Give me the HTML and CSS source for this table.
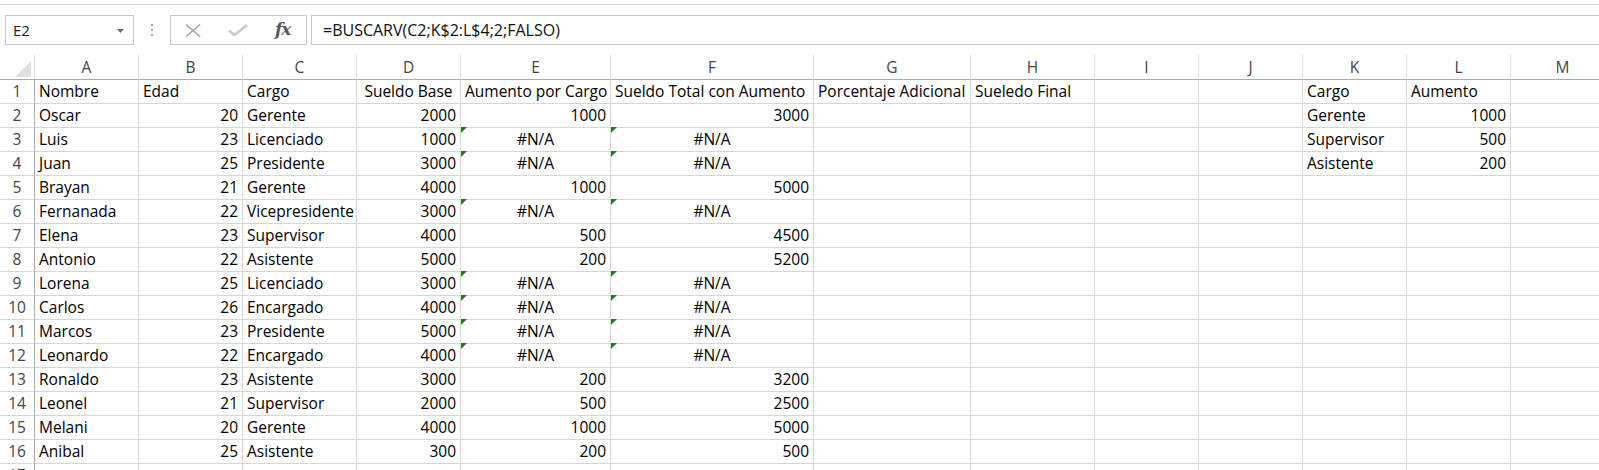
FILE: index.html
```html
<!DOCTYPE html>
<html lang="es">
<head>
<meta charset="utf-8">
<title>Excel - BUSCARV</title>
<link rel="stylesheet" href="styles.css">
</head>
<body>
<div class="topline"></div>
<div class="fbar">
  <div class="namebox"><span>E2</span><svg class="ddarrow" width="7" height="4" viewBox="0 0 7 4"><polygon points="0,0 7,0 3.5,4" fill="#6e6e6e"/></svg></div>
  <div class="sep"><svg width="2" height="12" viewBox="0 0 2 12"><rect x="0" y="0" width="2" height="2" fill="#a8a8a8"/><rect x="0" y="5" width="2" height="2" fill="#a8a8a8"/><rect x="0" y="10" width="2" height="2" fill="#a8a8a8"/></svg></div>
  <div class="fbtns">
    <svg width="16" height="13" viewBox="0 0 16 13"><path d="M1 0.5 L15 12.5 M15 0.5 L1 12.5" stroke="#a9a9a9" stroke-width="1.6" fill="none"/></svg>
    <svg width="20" height="12" viewBox="0 0 20 12"><path d="M1 6.5 L6.5 11 L19 1" stroke="#c9c9c9" stroke-width="2.6" fill="none"/></svg>
    <span class="fx">fx</span>
  </div>
  <div class="finput">=BUSCARV(C2;K$2:L$4;2;FALSO)</div>
</div>
<div class="sheet">
  <div class="row hdr"><div class="c corner"><svg width="16" height="16" viewBox="0 0 16 16"><polygon points="16,0 16,16 0,16" fill="#dfdfdf"/></svg></div><div class="c">A</div><div class="c">B</div><div class="c">C</div><div class="c">D</div><div class="c">E</div><div class="c">F</div><div class="c">G</div><div class="c">H</div><div class="c">I</div><div class="c">J</div><div class="c">K</div><div class="c">L</div><div class="c">M</div></div>
  <div class="row"><div class="c rh">1</div><div class="c">Nombre</div><div class="c">Edad</div><div class="c">Cargo</div><div class="c m">Sueldo Base</div><div class="c">Aumento por Cargo</div><div class="c">Sueldo Total con Aumento</div><div class="c">Porcentaje Adicional</div><div class="c">Sueledo Final</div><div class="c"></div><div class="c"></div><div class="c">Cargo</div><div class="c">Aumento</div><div class="c"></div></div>
  <div class="row"><div class="c rh">2</div><div class="c">Oscar</div><div class="c r">20</div><div class="c">Gerente</div><div class="c r">2000</div><div class="c r">1000</div><div class="c r">3000</div><div class="c"></div><div class="c"></div><div class="c"></div><div class="c"></div><div class="c">Gerente</div><div class="c r">1000</div><div class="c"></div></div>
  <div class="row"><div class="c rh">3</div><div class="c">Luis</div><div class="c r">23</div><div class="c">Licenciado</div><div class="c r">1000</div><div class="c m err">#N/A</div><div class="c m err">#N/A</div><div class="c"></div><div class="c"></div><div class="c"></div><div class="c"></div><div class="c">Supervisor</div><div class="c r">500</div><div class="c"></div></div>
  <div class="row"><div class="c rh">4</div><div class="c">Juan</div><div class="c r">25</div><div class="c">Presidente</div><div class="c r">3000</div><div class="c m err">#N/A</div><div class="c m err">#N/A</div><div class="c"></div><div class="c"></div><div class="c"></div><div class="c"></div><div class="c">Asistente</div><div class="c r">200</div><div class="c"></div></div>
  <div class="row"><div class="c rh">5</div><div class="c">Brayan</div><div class="c r">21</div><div class="c">Gerente</div><div class="c r">4000</div><div class="c r">1000</div><div class="c r">5000</div><div class="c"></div><div class="c"></div><div class="c"></div><div class="c"></div><div class="c"></div><div class="c"></div><div class="c"></div></div>
  <div class="row"><div class="c rh">6</div><div class="c">Fernanada</div><div class="c r">22</div><div class="c">Vicepresidente</div><div class="c r">3000</div><div class="c m err">#N/A</div><div class="c m err">#N/A</div><div class="c"></div><div class="c"></div><div class="c"></div><div class="c"></div><div class="c"></div><div class="c"></div><div class="c"></div></div>
  <div class="row"><div class="c rh">7</div><div class="c">Elena</div><div class="c r">23</div><div class="c">Supervisor</div><div class="c r">4000</div><div class="c r">500</div><div class="c r">4500</div><div class="c"></div><div class="c"></div><div class="c"></div><div class="c"></div><div class="c"></div><div class="c"></div><div class="c"></div></div>
  <div class="row"><div class="c rh">8</div><div class="c">Antonio</div><div class="c r">22</div><div class="c">Asistente</div><div class="c r">5000</div><div class="c r">200</div><div class="c r">5200</div><div class="c"></div><div class="c"></div><div class="c"></div><div class="c"></div><div class="c"></div><div class="c"></div><div class="c"></div></div>
  <div class="row"><div class="c rh">9</div><div class="c">Lorena</div><div class="c r">25</div><div class="c">Licenciado</div><div class="c r">3000</div><div class="c m err">#N/A</div><div class="c m err">#N/A</div><div class="c"></div><div class="c"></div><div class="c"></div><div class="c"></div><div class="c"></div><div class="c"></div><div class="c"></div></div>
  <div class="row"><div class="c rh">10</div><div class="c">Carlos</div><div class="c r">26</div><div class="c">Encargado</div><div class="c r">4000</div><div class="c m err">#N/A</div><div class="c m err">#N/A</div><div class="c"></div><div class="c"></div><div class="c"></div><div class="c"></div><div class="c"></div><div class="c"></div><div class="c"></div></div>
  <div class="row"><div class="c rh">11</div><div class="c">Marcos</div><div class="c r">23</div><div class="c">Presidente</div><div class="c r">5000</div><div class="c m err">#N/A</div><div class="c m err">#N/A</div><div class="c"></div><div class="c"></div><div class="c"></div><div class="c"></div><div class="c"></div><div class="c"></div><div class="c"></div></div>
  <div class="row"><div class="c rh">12</div><div class="c">Leonardo</div><div class="c r">22</div><div class="c">Encargado</div><div class="c r">4000</div><div class="c m err">#N/A</div><div class="c m err">#N/A</div><div class="c"></div><div class="c"></div><div class="c"></div><div class="c"></div><div class="c"></div><div class="c"></div><div class="c"></div></div>
  <div class="row"><div class="c rh">13</div><div class="c">Ronaldo</div><div class="c r">23</div><div class="c">Asistente</div><div class="c r">3000</div><div class="c r">200</div><div class="c r">3200</div><div class="c"></div><div class="c"></div><div class="c"></div><div class="c"></div><div class="c"></div><div class="c"></div><div class="c"></div></div>
  <div class="row"><div class="c rh">14</div><div class="c">Leonel</div><div class="c r">21</div><div class="c">Supervisor</div><div class="c r">2000</div><div class="c r">500</div><div class="c r">2500</div><div class="c"></div><div class="c"></div><div class="c"></div><div class="c"></div><div class="c"></div><div class="c"></div><div class="c"></div></div>
  <div class="row"><div class="c rh">15</div><div class="c">Melani</div><div class="c r">20</div><div class="c">Gerente</div><div class="c r">4000</div><div class="c r">1000</div><div class="c r">5000</div><div class="c"></div><div class="c"></div><div class="c"></div><div class="c"></div><div class="c"></div><div class="c"></div><div class="c"></div></div>
  <div class="row"><div class="c rh">16</div><div class="c">Anibal</div><div class="c r">25</div><div class="c">Asistente</div><div class="c r">300</div><div class="c r">200</div><div class="c r">500</div><div class="c"></div><div class="c"></div><div class="c"></div><div class="c"></div><div class="c"></div><div class="c"></div><div class="c"></div></div>
  <div class="row"><div class="c rh">17</div><div class="c"></div><div class="c"></div><div class="c"></div><div class="c"></div><div class="c"></div><div class="c"></div><div class="c"></div><div class="c"></div><div class="c"></div><div class="c"></div><div class="c"></div><div class="c"></div><div class="c"></div></div>
</div>
</body>
</html>
```
FILE: styles.css
```css
* { box-sizing: border-box; }
html, body { margin: 0; padding: 0; background: #fff; }
body {
  width: 1599px;
  height: 470px;
  overflow: hidden;
  font-family: "Open Sans", "Liberation Sans", sans-serif;
  font-size: 15.5px;
  color: #000;
}
.topline { height: 5px; border-bottom: 1px solid #d6d6d6; }
.fbar {
  display: flex;
  height: 30px;
  margin-top: 10px;
}
.namebox {
  margin-left: 5px;
  width: 129px;
  flex: none;
  border: 1px solid #c6c6c6;
  display: flex;
  align-items: center;
  justify-content: space-between;
  padding: 0 9px 0 7px;
  font-size: 15px;
  color: #222;
}
.ddarrow { margin-top: 1px; }
.sep {
  width: 36px;
  flex: none;
  display: flex;
  align-items: center;
  justify-content: center;
  padding-right: 1px;
}
.fbtns {
  width: 137px;
  flex: none;
  border: 1px solid #c6c6c6;
  display: flex;
  align-items: center;
  justify-content: space-around;
  padding: 0 2px 0 0;
}
.fx {
  font-family: "DejaVu Serif", "Liberation Serif", serif;
  font-style: italic;
  font-weight: bold;
  font-size: 17px;
  color: #5a5a5a;
  letter-spacing: -1px;
  margin-top: -2px;
}
.finput {
  flex: 1;
  margin-left: 4px;
  margin-right: -4px;
  border: 1px solid #c6c6c6;
  display: flex;
  align-items: center;
  padding-left: 11px;
  font-size: 16px;
  color: #111;
}
.sheet { margin-top: 10px; }
.row {
  display: grid;
  grid-template-columns: 35px 104px 104px 114px 104px 150px 203px 157px 124px 104px 104px 104px 104px 104px;
  height: 24px;
}
.c {
  border-right: 1px solid #d6d6d6;
  border-bottom: 1px solid #d6d6d6;
  padding: 1px 4px 0;
  line-height: 23px;
  white-space: nowrap;
  position: relative;
}
.r { text-align: right; padding-right: 4px; }
.m { text-align: center; }
.rh {
  text-align: center;
  color: #444;
  border-right-color: #ababab;
  padding: 1px 0 0;
}
.hdr .c {
  text-align: center;
  color: #444;
  border-right-color: #e1e1e1;
  border-bottom-color: #ababab;
}
.hdr .corner {
  display: flex;
  align-items: flex-end;
  justify-content: flex-end;
  padding: 0 3px 2px 0;
}
.err::before {
  content: "";
  position: absolute;
  left: 0;
  top: 0;
  border-top: 6px solid #1d7d1d;
  border-right: 6px solid transparent;
}
```
